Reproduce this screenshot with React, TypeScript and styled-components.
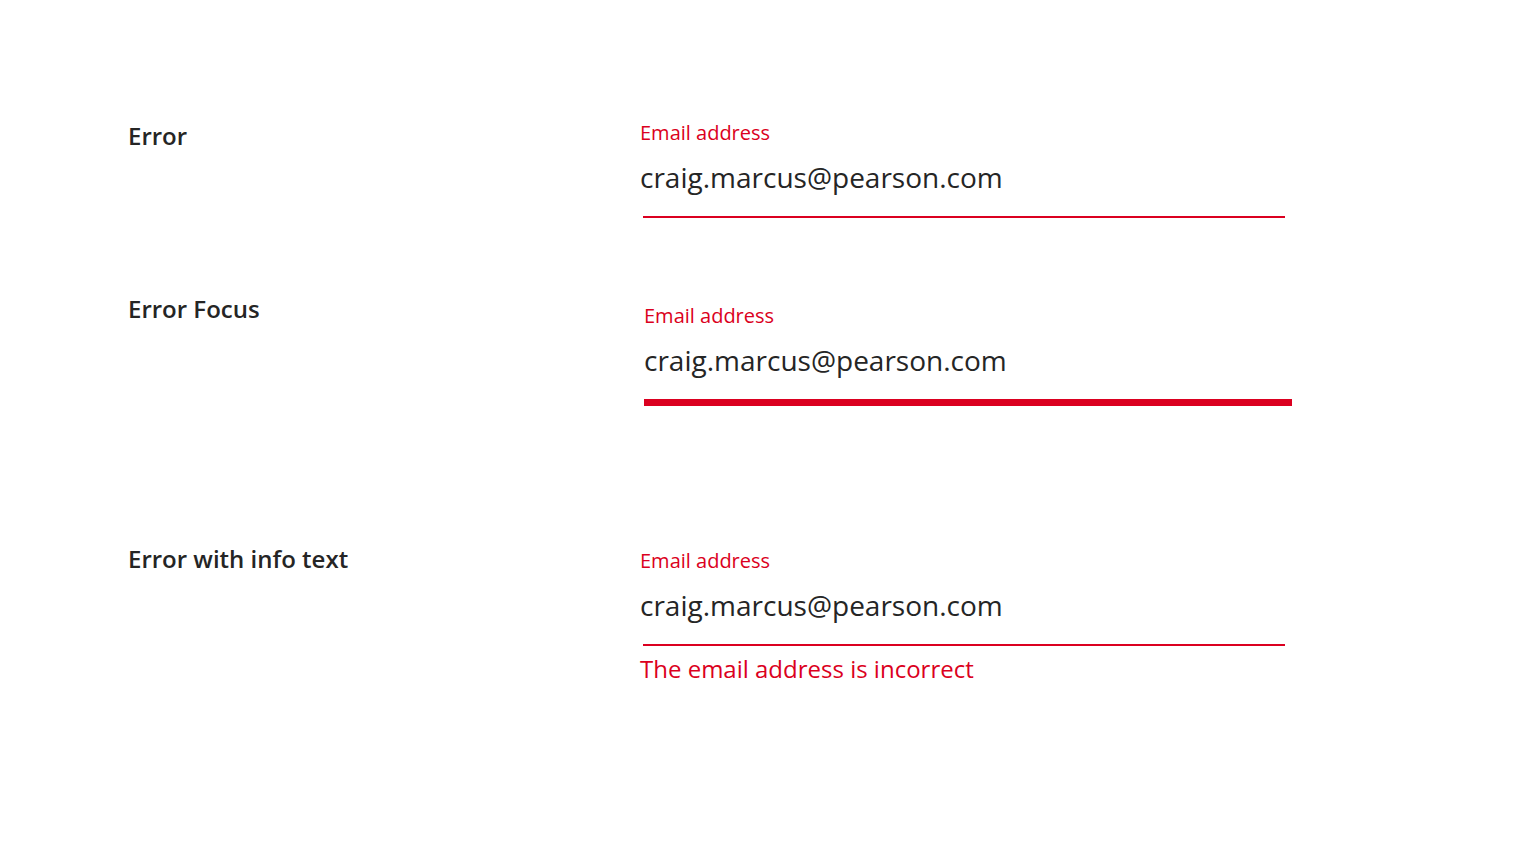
import React from "react";
import styled, { createGlobalStyle } from "styled-components";

const Global = createGlobalStyle`
  html, body { margin: 0; padding: 0; background: #fff; }
  body { font-family: "Open Sans", "Noto Sans", sans-serif; color: #252525; }
`;

const RED = "#db0020";

const Page = styled.main`
  width: 1520px;
  height: 844px;
  box-sizing: border-box;
  padding: 121px 0 0 128px;
  display: flex;
  flex-direction: column;
`;

const Row = styled.section<{ $gap: number }>`
  display: grid;
  grid-template-columns: 510px 1fr;
  align-items: start;
  margin-bottom: ${(p) => p.$gap}px;
`;

const StateName = styled.h2<{ $offset: number }>`
  margin: ${(p) => p.$offset}px 0 0;
  font-size: 24px;
  line-height: 30px;
  font-weight: 600;
  color: #252525;
`;

const Field = styled.div<{ $shift: number; $width: number }>`
  display: flex;
  flex-direction: column;
  margin-left: ${(p) => p.$shift}px;
  width: ${(p) => p.$width}px;
`;

const FieldLabel = styled.label`
  font-size: 20px;
  line-height: 24px;
  color: ${RED};
`;

const Value = styled.div`
  margin-top: 20px;
  font-size: 28px;
  line-height: 24px;
  color: #252525;
`;

const Underline = styled.div<{ $thick: number; $inset: number; $drop?: number }>`
  margin-top: ${(p) => 28 - Math.floor(p.$thick / 2) + (p.$drop ?? 0)}px;
  margin-left: ${(p) => p.$inset}px;
  height: ${(p) => p.$thick}px;
  background: ${RED};
`;

const ErrorText = styled.div`
  margin-top: 8px;
  font-size: 24px;
  line-height: 30px;
  color: ${RED};
`;

export default function App() {
  return (
    <>
      <Global />
      <Page>
        <Row $gap={86}>
          <StateName $offset={0}>Error</StateName>
          <Field $shift={2} $width={645}>
            <FieldLabel>Email address</FieldLabel>
            <Value>craig.marcus@pearson.com</Value>
            <Underline $thick={2} $inset={3} />
          </Field>
        </Row>
        <Row $gap={143}>
          <StateName $offset={-10}>Error Focus</StateName>
          <Field $shift={6} $width={648}>
            <FieldLabel>Email address</FieldLabel>
            <Value>craig.marcus@pearson.com</Value>
            <Underline $thick={7} $inset={0} $drop={2} />
          </Field>
        </Row>
        <Row $gap={0}>
          <StateName $offset={-5}>Error with info text</StateName>
          <Field $shift={2} $width={645}>
            <FieldLabel>Email address</FieldLabel>
            <Value>craig.marcus@pearson.com</Value>
            <Underline $thick={2} $inset={3} />
            <ErrorText>The email address is incorrect</ErrorText>
          </Field>
        </Row>
      </Page>
    </>
  );
}
